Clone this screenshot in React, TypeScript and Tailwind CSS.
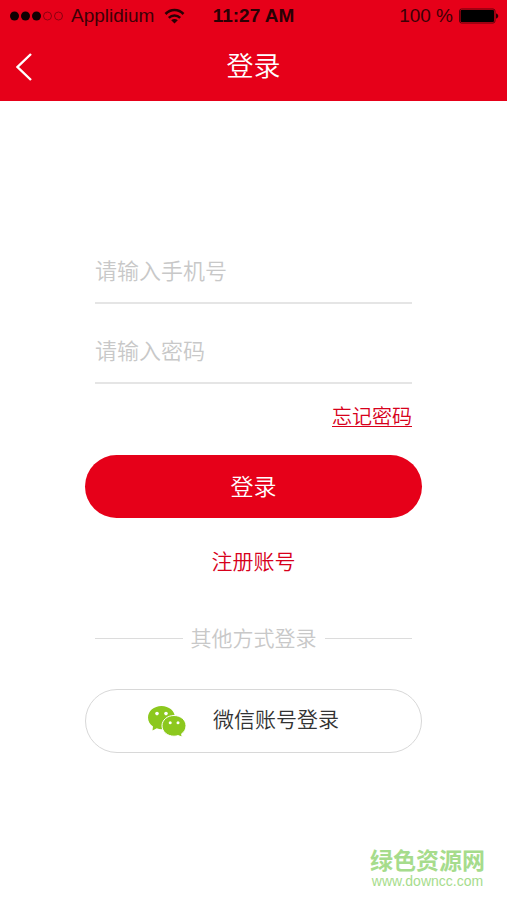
import { useState } from 'react'

function StatusBar() {
  return (
    <div className="grid h-8 grid-cols-[1fr_auto_1fr] items-center pl-2 pr-2 font-['Liberation_Sans',sans-serif] text-[19px] leading-8 text-[#3d0006]">
      <div className="flex items-center pl-[2px]">
        <svg width="54" height="10" viewBox="0 0 54 10" aria-hidden="true">
          <circle cx="4.5" cy="5" r="4.5" fill="#120002" />
          <circle cx="15.5" cy="5" r="4.5" fill="#120002" />
          <circle cx="26.5" cy="5" r="4.5" fill="#120002" />
          <circle cx="37.5" cy="5" r="4" fill="none" stroke="#8c0010" />
          <circle cx="48.5" cy="5" r="4" fill="none" stroke="#8c0010" />
        </svg>
        <span className="ml-[7px]">Applidium</span>
        <svg className="ml-[10px]" width="21" height="16" viewBox="0 0 21 16" fill="none" aria-hidden="true">
          <path d="M1.5 6C6.5 0.7 14.5 0.7 19.5 6" stroke="#2a0004" strokeWidth="2.6" />
          <path d="M4.8 9.8C8 6.6 13 6.6 16.2 9.8" stroke="#2a0004" strokeWidth="2.5" />
          <path d="M10.5 15.4L7.2 12.2C9 10.5 12 10.5 13.8 12.2Z" fill="#2a0004" />
        </svg>
      </div>
      <span className="font-bold text-[#2a0004]">11:27 AM</span>
      <div className="flex items-center justify-end">
        <span>100 %</span>
        <svg className="ml-[6px]" width="40" height="16" viewBox="0 0 40 16" aria-hidden="true">
          <rect x="0.5" y="1" width="35.5" height="14" rx="2" fill="none" stroke="#5c000a" />
          <rect x="1.5" y="2" width="33.5" height="12" rx="1" fill="#000" />
          <path d="M37 5.5C40 6 40 10 37 10.5Z" fill="#2a0004" />
        </svg>
      </div>
    </div>
  )
}

function WechatIcon() {
  return (
    <svg width="38" height="32" viewBox="0 0 38 32" aria-hidden="true">
      <path
        d="M13.5 1C6 1 0 6 0 12.6C0 16.4 2 19.5 5 21.6L4.5 25.4L8.8 23.3C10.3 23.9 11.9 24.2 13.5 24.2C20.9 24.2 27 19 27 12.6C27 6 20.9 1 13.5 1Z"
        fill="#8cc81e"
      />
      <path
        d="M26 10.5C19.4 10.5 14 15 14 20.8C14 26.6 19.4 31.2 26 31.2C27.5 31.2 28.8 31 30 30.6L34.2 32L33.6 28.8C36.4 27 38 24 38 20.8C38 15 32.7 10.5 26 10.5Z"
        fill="#8cc81e"
        stroke="#fff"
        strokeWidth="1"
      />
      <circle cx="9" cy="8.6" r="1.8" fill="#fff" />
      <circle cx="18" cy="8.6" r="1.8" fill="#fff" />
      <circle cx="22.2" cy="17.8" r="1.5" fill="#fff" />
      <circle cx="30" cy="17.8" r="1.5" fill="#fff" />
    </svg>
  )
}

export default function App() {
  const [phone, setPhone] = useState('')
  const [password, setPassword] = useState('')

  const inputClass =
    'h-16 w-full border-b-2 border-[#e5e5e5] bg-transparent pb-1 text-[22px] font-[350] text-[#333] outline-none placeholder:text-[#c8c8c8] placeholder:opacity-100'

  return (
    <div className="flex min-h-screen flex-col bg-white font-['Noto_Sans_CJK_SC',sans-serif] font-[350]">
      <header className="bg-[#e60019]">
        <StatusBar />
        <div className="grid h-[69px] grid-cols-[1fr_auto_1fr] items-center px-4 text-white">
          <button type="button" aria-label="返回" className="w-4 cursor-pointer">
            <svg width="17" height="28" viewBox="0 0 17 28" fill="none" aria-hidden="true">
              <path d="M15 1L1.5 14L15 27" stroke="#fff" strokeWidth="2.4" />
            </svg>
          </button>
          <h1 className="pb-1 text-[27px] font-[350] leading-10">登录</h1>
        </div>
      </header>

      <main className="px-[85px] pt-[139px]">
        <form onSubmit={(e) => e.preventDefault()}>
          <div className="flex flex-col gap-4 px-[10px]">
            <input
              type="tel"
              aria-label="手机号"
              value={phone}
              onChange={(e) => setPhone(e.target.value)}
              placeholder="请输入手机号"
              className={inputClass}
            />
            <input
              type="password"
              aria-label="密码"
              value={password}
              onChange={(e) => setPassword(e.target.value)}
              placeholder="请输入密码"
              className={inputClass}
            />
          </div>
          <div className="mt-4 flex justify-end px-[10px]">
            <a href="#forgot" className="text-[20px] leading-8 text-[#d7001b] underline decoration-1 underline-offset-2">
              忘记密码
            </a>
          </div>
          <button
            type="submit"
            className="mt-[23px] h-[63px] w-full cursor-pointer rounded-full bg-[#e60019] pb-[2px] text-[23px] text-white"
          >
            登录
          </button>
        </form>

        <div className="mt-[26px] text-center">
          <a href="#register" className="text-[21px] leading-8 text-[#d7001b]">
            注册账号
          </a>
        </div>

        <div className="mt-[45px] flex items-center gap-2 px-[10px]">
          <span className="h-px flex-1 bg-[#dcdcdc]" />
          <span className="pb-[2px] text-[21px] leading-8 text-[#c8c8c8]">其他方式登录</span>
          <span className="h-px flex-1 bg-[#dcdcdc]" />
        </div>

        <button
          type="button"
          className="mt-[34px] flex h-16 w-full cursor-pointer items-center gap-[27px] rounded-full border border-[#d8d8d8] pl-[62px] text-[21px] text-[#333]"
        >
          <WechatIcon />
          <span className="pb-1">微信账号登录</span>
        </button>
      </main>

      <footer className="mt-auto flex justify-end pb-[11px] pr-[22px] text-[#a6dc8c]">
        <div className="text-center">
          <p className="text-[23px] font-bold leading-7">绿色资源网</p>
          <p className="font-['Liberation_Sans',sans-serif] text-[14px] leading-4">www.downcc.com</p>
        </div>
      </footer>
    </div>
  )
}
